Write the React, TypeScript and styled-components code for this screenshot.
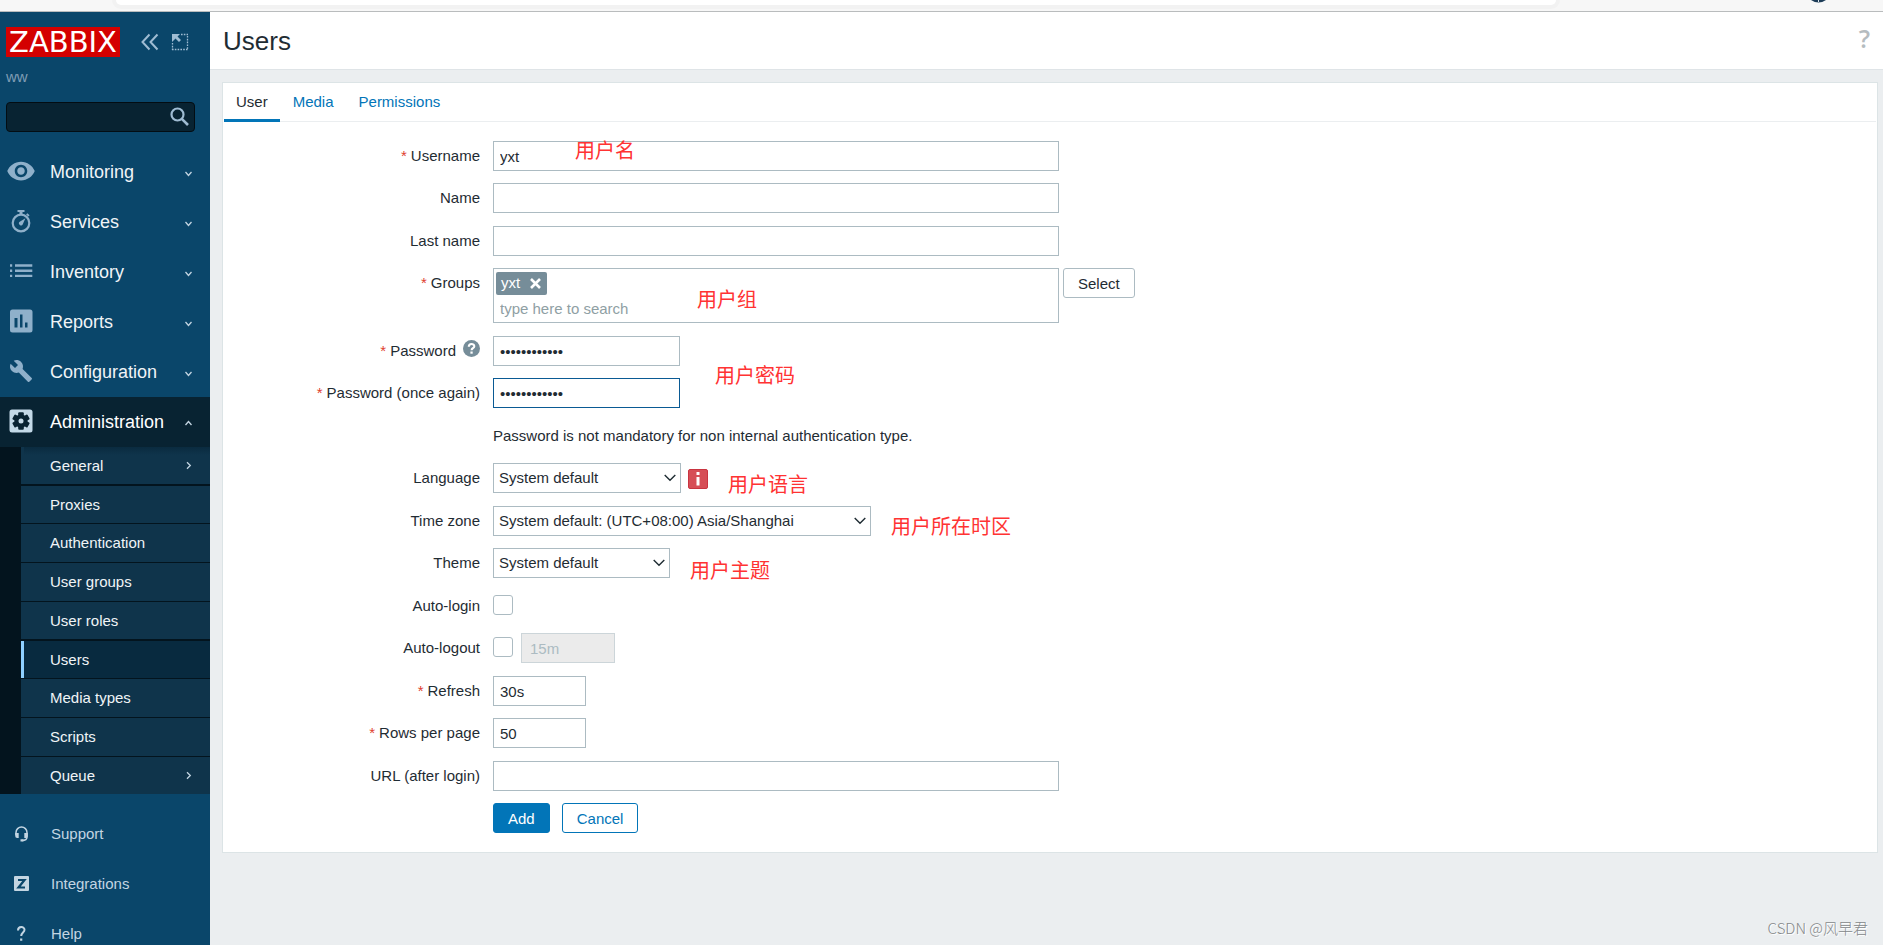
import React from "react";
import styled, { createGlobalStyle, css } from "styled-components";

const GlobalStyle = createGlobalStyle`
  *, *::before, *::after { box-sizing: border-box; }
  html, body, #root { height: 100%; }
  body {
    margin: 0;
    overflow: hidden;
    background: #ebeef0;
    color: #1f2c33;
    font: 15px/20px "Liberation Sans", Arial, "Noto Sans CJK SC", sans-serif;
  }
  button, input, select { font: inherit; color: inherit; }
`;

/* ---------- Browser edge ---------- */

const Page = styled.div`
  position: relative;
  display: flex;
  flex-direction: column;
  height: 100vh;
`;

const BrowserEdge = styled.div`
  flex: none;
  display: flex;
  justify-content: space-between;
  height: 12px;
  padding: 0 57px 0 116px;
  background: #f7f7f7;
  border-bottom: 1px solid #b9bcbd;
`;

const AddressBar = styled.div`
  flex: 1;
  height: 5px;
  margin-right: 255px;
  background: #fff;
  border-radius: 0 0 5px 5px;
  box-shadow: 0 0 0 4px #f2f2f2;
`;

const Shell = styled.div`
  flex: 1;
  display: flex;
  min-height: 0;
`;

/* ---------- Sidebar ---------- */

const Sidebar = styled.aside`
  flex: none;
  width: 210px;
  overflow: hidden;
  background: #0a466a;
`;

const SidebarHeader = styled.div`
  display: flex;
  align-items: center;
  padding: 15px 0 0 6px;
`;

const Logo = styled.a`
  width: 114px;
  height: 30px;
  margin-right: 18px;
  background: #d40000;
  color: #fff;
  font: 29px/30px "DejaVu Sans", sans-serif;
  text-align: center;
  text-decoration: none;
`;

const IconButton = styled.button`
  display: flex;
  align-items: center;
  justify-content: center;
  width: 30px;
  height: 30px;
  padding: 0;
  border: 0;
  background: none;
  color: #9fbcd3;
`;

const ServerName = styled.div`
  padding: 10px 6px 0;
  color: #7f9db5;
`;

const Search = styled.form`
  display: flex;
  align-items: center;
  height: 30px;
  margin: 15px 15px 15px 6px;
  background: #082332;
  border: 1px solid #030d13;
  border-radius: 4px;
`;

const SearchInput = styled.input`
  flex: 1;
  min-width: 0;
  padding: 0 6px;
  border: 0;
  outline: 0;
  background: none;
  color: #fff;
`;

const MenuList = styled.ul`
  margin: 0;
  padding: 0;
  list-style: none;
`;

const MenuLink = styled.a<{ $open?: boolean }>`
  display: flex;
  align-items: center;
  height: 50px;
  padding: 0 17px 0 6px;
  color: ${(p) => (p.$open ? "#fff" : "#f0f4f7")};
  background: ${(p) => (p.$open ? "#082332" : "transparent")};
  font-size: 18px;
  text-decoration: none;
  svg:first-child { color: ${(p) => (p.$open ? "#c3d9e7" : "#8fb0ca")}; }
`;

const MenuText = styled.span`
  flex: 1;
  padding-left: 14px;
`;

const SubMenu = styled.ul`
  margin: 0;
  padding: 0 0 0 21px;
  list-style: none;
  background: #03141e;
`;

const SubItem = styled.li`
  height: 39px;
  padding-bottom: 1px;
  &:nth-child(4n + 1) { padding-bottom: 2px; }
  &:nth-child(4n + 2) { height: 38px; }
  &:first-child a { background: linear-gradient(#0a2b3f, #0f344b 8px); }
  &:last-child { height: 37px; padding: 0; }
`;

const SubLink = styled.a<{ $current?: boolean }>`
  display: flex;
  align-items: center;
  justify-content: space-between;
  height: 100%;
  padding: 0 17px 0 26px;
  border-left: 3px solid #0f344b;
  background: #0f344b;
  color: #f0f4f7;
  text-decoration: none;
  ${(p) =>
    p.$current &&
    css`
      border-color: #8fd0ff;
      background: #082a3f;
    `}
`;

const SupportList = styled(MenuList)`
  margin-top: 15px;
`;

const SupportLink = styled.a`
  display: flex;
  align-items: center;
  gap: 15px;
  height: 50px;
  padding-left: 6px;
  color: #c3d5e2;
  text-decoration: none;
`;

/* ---------- Main column ---------- */

const Main = styled.main`
  flex: 1;
  min-width: 0;
`;

const PageHeader = styled.header`
  display: flex;
  align-items: center;
  justify-content: space-between;
  height: 58px;
  padding: 0 13px;
  background: #fff;
  border-bottom: 1px solid #dfe4e7;
`;

const Title = styled.h1`
  margin: 0;
  font-size: 26px;
  line-height: 30px;
  font-weight: 400;
`;

const HelpLink = styled.a`
  padding-bottom: 5px;
  color: #b5bcc0;
  font: 600 25px/30px "Open Sans", sans-serif;
  text-decoration: none;
`;

const Card = styled.section`
  margin: 12px 5px 0 12px;
  padding-bottom: 19px;
  background: #fff;
  border: 1px solid #dce4e6;
`;

const Tabs = styled.nav`
  display: flex;
  gap: 1px;
  height: 39px;
  margin: 0 1px;
  border-bottom: 1px solid #ebeef0;
`;

const Tab = styled.a<{ $active?: boolean }>`
  height: 39px;
  padding: 9px 12px 7px;
  color: ${(p) => (p.$active ? "#1f2c33" : "#0275b8")};
  border-bottom: 3px solid ${(p) => (p.$active ? "#0275b8" : "transparent")};
  text-decoration: none;
`;

const Form = styled.form`
  padding-top: 19px;
`;

/* Rows alternate 12px and 13px gaps: a 42.5px rhythm on whole pixels. */
const Row = styled.div`
  display: grid;
  grid-template-columns: 257px minmax(0, 1fr);
  column-gap: 13px;
  margin-bottom: 12px;
  &:nth-child(even) { margin-bottom: 13px; }
  &:last-child { margin-bottom: 0; }
`;

const Label = styled.label<{ $required?: boolean }>`
  display: flex;
  justify-content: flex-end;
  align-items: center;
  height: 30px;
  ${(p) =>
    p.$required &&
    css`
      &::before {
        content: "*";
        margin-right: 4px;
        color: #e0402f;
      }
    `}
`;

const LabelCell = styled.div`
  display: flex;
  justify-content: flex-end;
  gap: 7px;
`;

const HelpBadge = styled.button`
  width: 17px;
  height: 17px;
  margin-top: 4px;
  padding: 0;
  border: 0;
  background: none;
  svg { display: block; }
`;

const Field = styled.div<{ $gap?: number }>`
  position: relative;
  display: flex;
  gap: ${(p) => p.$gap ?? 0}px;
  min-height: 30px;
`;

const Input = styled.input<{ $width: number; $focused?: boolean }>`
  width: ${(p) => p.$width}px;
  height: 30px;
  padding: 0 6px;
  border: 1px solid ${(p) => (p.$focused ? "#0a5a94" : "#acbbc2")};
  border-radius: 0;
  background: #fff;
  outline: 0;
  &:disabled {
    padding-left: 8px;
    background: #ebebeb;
    border-color: #ccd5d9;
    color: #acbbc2;
  }
`;

const Multiselect = styled.div`
  width: 566px;
  height: 55px;
  margin-right: 4px;
  padding: 3px 2px;
  border: 1px solid #acbbc2;
`;

const Tag = styled.span`
  display: flex;
  align-items: center;
  justify-content: space-between;
  width: 51px;
  height: 23px;
  padding: 0 6px 1px 5px;
  border-radius: 2px;
  background: #768d99;
  color: #fff;
`;

const TagRemove = styled.button`
  display: flex;
  padding: 0;
  border: 0;
  background: none;
`;

const GroupSearch = styled.input`
  display: block;
  width: 100%;
  height: 26px;
  padding: 0 4px;
  border: 0;
  outline: 0;
  background: none;
  &::placeholder { color: #8fa0a4; opacity: 1; }
`;

const SelectBox = styled.div<{ $width: number }>`
  position: relative;
  width: ${(p) => p.$width}px;
  height: 30px;
  svg {
    position: absolute;
    top: 11px;
    right: 5px;
    pointer-events: none;
  }
`;

const NativeSelect = styled.select`
  appearance: none;
  width: 100%;
  height: 30px;
  padding: 0 20px 0 5px;
  border: 1px solid #acbbc2;
  border-radius: 0;
  background: #fff;
`;

const InfoButton = styled.button`
  display: flex;
  align-items: center;
  justify-content: center;
  width: 20px;
  height: 20px;
  margin-top: 6px;
  padding: 0;
  border: 1px solid #c93440;
  border-radius: 2px;
  background: #d64e56;
`;

const Checkbox = styled.input`
  appearance: none;
  width: 20px;
  height: 20px;
  margin: 4px 0 0;
  border: 1px solid #acbbc2;
  border-radius: 3px;
  background: #fff;
`;

const Message = styled.div`
  line-height: 30px;
`;

const Button = styled.button<{ $kind?: "plain" | "primary" | "outline" }>`
  height: 30px;
  padding: 1px 14px 0;
  border-radius: 3px;
  border: 1px solid ${(p) => (p.$kind === "plain" ? "#acbbc2" : "#0275b8")};
  background: ${(p) => (p.$kind === "primary" ? "#0275b8" : "#fff")};
  color: ${(p) =>
    p.$kind === "primary" ? "#fff" : p.$kind === "outline" ? "#0275b8" : "#1f2c33"};
`;

/* Red remark laid over the form. */
const Note = styled.span<{ $left: number; $top: number }>`
  position: absolute;
  left: ${(p) => p.$left}px;
  top: ${(p) => p.$top}px;
  color: #ff3333;
  font: 400 20px/30px "Noto Sans CJK SC", sans-serif;
  white-space: nowrap;
  pointer-events: none;
`;

const Watermark = styled.div`
  position: absolute;
  right: 15px;
  bottom: 7px;
  color: #85888a;
  font: 300 15px/20px "Noto Sans CJK SC", sans-serif;
  text-shadow: 1px 1px 0 #fff;
`;

/* ---------- Icons ---------- */

const Box30 = ({ children }: { children: React.ReactNode }) => (
  <svg width="30" height="30" viewBox="0 0 30 30" fill="currentColor" aria-hidden="true">
    {children}
  </svg>
);

const EyeIcon = () => (
  <Box30>
    <path
      transform="translate(0 -1) scale(1.25)"
      fillRule="evenodd"
      d="M12 4.5C7 4.5 2.73 7.61 1 12c1.73 4.39 6 7.5 11 7.5s9.27-3.11 11-7.5c-1.73-4.39-6-7.5-11-7.5zM12 17c-2.76 0-5-2.24-5-5s2.24-5 5-5 5 2.24 5 5-2.24 5-5 5zm0-8c-1.66 0-3 1.34-3 3s1.34 3 3 3 3-1.34 3-3-1.34-3-3-3z"
    />
  </Box30>
);

const StopwatchIcon = () => (
  <Box30>
    <circle cx="15" cy="16" r="8.3" fill="none" stroke="currentColor" strokeWidth="2.2" />
    <path d="M11.500 3h7v2h-2v2h-3V5h-2zM21.300 6.200l2.300 2-1.300 1.400-2.200-2zM19.400 11.200l-2.600 6a2 2 0 1 1-3.100-2.400z" />
  </Box30>
);

const ListIcon = () => (
  <Box30>
    <path d="M4 7.300h2.200v2.400H4zM9 7.300h17.300v2.400H9zM4 12.500h2.200v2.400H4zM9 12.500h17.300v2.400H9zM4 17.700h2.200v2.400H4zM9 17.700h17.300v2.400H9z" />
  </Box30>
);

const ReportIcon = () => (
  <Box30>
    <path
      fillRule="evenodd"
      d="M6.500 2.500h17.500A2.500 2.500 0 0 1 26.500 5v18a2.500 2.500 0 0 1-2.500 2.500h-17.500A2.500 2.500 0 0 1 4 23V5a2.500 2.500 0 0 1 2.500-2.500zM8.500 11v9.500h3V11zM14 7.500v13h2.500v-13zM19 15.500v5h2.500v-5z"
    />
  </Box30>
);

const WrenchIcon = () => (
  <Box30>
    <path
      transform="translate(3 2)"
      d="M22.700 19l-9.100-9.100c.9-2.300.4-5-1.500-6.900-2-2-5-2.400-7.400-1.300L9 6 6 9 1.600 4.700C.4 7.100.9 10.100 2.900 12.100c1.900 1.900 4.600 2.400 6.900 1.500l9.100 9.100c.4.4 1 .4 1.400 0l2.300-2.300c.5-.4.5-1.100.1-1.400z"
    />
  </Box30>
);

const GearIcon = () => (
  <Box30>
    <rect x="3.500" y="2.500" width="23" height="23" rx="2.500" />
    <g fill="#082332">
      <circle cx="15" cy="14" r="6.600" />
      {[0, 60, 120].map((a) => (
        <rect key={a} x="12.200" y="5.300" width="5.600" height="17.400" rx="1" transform={`rotate(${a} 15 14)`} />
      ))}
    </g>
    <circle cx="15" cy="14" r="2.500" />
  </Box30>
);

const HeadsetIcon = () => (
  <Box30>
    <path
      d="M10 16v-2.500a5.500 5.500 0 0 1 11 0V18c0 2-1.500 3.500-5 3.500"
      fill="none"
      stroke="currentColor"
      strokeWidth="1.500"
    />
    <path d="M9.200 14h3.500v5h-1.500a2 2 0 0 1-2-2zM18.300 14h3.500v3a2 2 0 0 1-2 2h-1.500zM14.500 20.300h3v2.200h-3z" />
  </Box30>
);

const ZIcon = () => (
  <Box30>
    <rect x="8" y="7" width="15" height="15" rx="1" />
    <path d="M12 11h6.500l-6 7.500H19" fill="none" stroke="#0a466a" strokeWidth="2.200" />
  </Box30>
);

const QuestionIcon = () => (
  <Box30>
    <path
      d="M12 11.500c0-4.500 6.500-4.300 6.500-.8 0 2.800-3.300 2.800-3.300 6.300"
      fill="none"
      stroke="currentColor"
      strokeWidth="2"
    />
    <path d="M14.100 19.500h2.200v2.200h-2.200z" />
  </Box30>
);

const Chevron = ({ dir }: { dir: "up" | "down" | "right" }) => (
  <svg width="9" height="9" viewBox="0 0 9 9" fill="none" stroke="#c3d5e2" strokeWidth="1.300" aria-hidden="true">
    <path d={{ up: "M1.500 7l3-3.500L7.500 7", down: "M1.500 4l3 3.500L7.500 4", right: "M3 1.300l3.300 3.200L3 7.700" }[dir]} />
  </svg>
);

const SelectArrow = () => (
  <svg width="12" height="8" viewBox="0 0 12 8" fill="none" stroke="#1f2c33" strokeWidth="1.400" aria-hidden="true">
    <path d="M.7 1l5.300 5.300L11.300 1" />
  </svg>
);

/* ---------- Data ---------- */

const menu = [
  { text: "Monitoring", icon: <EyeIcon /> },
  { text: "Services", icon: <StopwatchIcon /> },
  { text: "Inventory", icon: <ListIcon /> },
  { text: "Reports", icon: <ReportIcon /> },
  { text: "Configuration", icon: <WrenchIcon /> },
  { text: "Administration", icon: <GearIcon />, open: true },
];

const administration = [
  { text: "General", nested: true },
  { text: "Proxies" },
  { text: "Authentication" },
  { text: "User groups" },
  { text: "User roles" },
  { text: "Users", current: true },
  { text: "Media types" },
  { text: "Scripts" },
  { text: "Queue", nested: true },
];

const support = [
  { text: "Support", icon: <HeadsetIcon /> },
  { text: "Integrations", icon: <ZIcon /> },
  { text: "Help", icon: <QuestionIcon /> },
];

interface TextRowProps {
  id: string;
  label: string;
  width: number;
  value?: string;
  type?: string;
  required?: boolean;
  focused?: boolean;
  children?: React.ReactNode;
}

const TextRow = ({ id, label, width, value = "", type = "text", required, focused, children }: TextRowProps) => (
  <Row>
    <Label htmlFor={id} $required={required}>{label}</Label>
    <Field>
      <Input id={id} type={type} $width={width} $focused={focused} defaultValue={value} />
      {children}
    </Field>
  </Row>
);

interface SelectRowProps {
  id: string;
  label: string;
  width: number;
  value: string;
  children?: React.ReactNode;
}

const SelectRow = ({ id, label, width, value, children }: SelectRowProps) => (
  <Row>
    <Label htmlFor={id}>{label}</Label>
    <Field $gap={7}>
      <SelectBox $width={width}>
        <NativeSelect id={id}>
          <option>{value}</option>
        </NativeSelect>
        <SelectArrow />
      </SelectBox>
      {children}
    </Field>
  </Row>
);

export default function App() {
  return (
    <Page>
      <GlobalStyle />
      <BrowserEdge>
        <AddressBar />
        <svg width="15" height="3" viewBox="0 0 15 3" aria-hidden="true">
          <path d="M0 0h15Q7.500 5 0 0z" fill="#1d3c57" />
          <path d="M7 0h1v2H7z" fill="#dfe8ee" />
        </svg>
      </BrowserEdge>
      <Shell>
        <Sidebar>
          <SidebarHeader>
            <Logo href="#">ZABBIX</Logo>
            <IconButton type="button" aria-label="Collapse sidebar">
              <svg width="30" height="30" viewBox="0 0 30 30" fill="none" stroke="currentColor" strokeWidth="2" aria-hidden="true">
                <path d="M11.500 7.500L4.500 15l7 7.500M19.500 7.500L12.500 15l7 7.500" />
              </svg>
            </IconButton>
            <IconButton type="button" aria-label="Hide sidebar">
              <svg width="30" height="30" viewBox="0 0 30 30" fill="none" stroke="currentColor" aria-hidden="true">
                <path d="M13 7.500h7M19.500 9v14M4.500 16v7M4 22.500h16" strokeWidth="1.300" strokeDasharray="1.600 1.200" />
                <path d="M4 7h8l-2.500 2.500 3.500 3.500-2 2-3.500-3.500L4 15z" fill="currentColor" stroke="none" />
              </svg>
            </IconButton>
          </SidebarHeader>
          <ServerName>ww</ServerName>
          <Search role="search">
            <SearchInput type="text" aria-label="Search" />
            <IconButton type="button" aria-label="Run search">
              <svg width="30" height="30" viewBox="0 0 30 30" fill="none" stroke="currentColor" aria-hidden="true">
                <circle cx="13.500" cy="12.500" r="6" strokeWidth="2.200" />
                <path d="M17.800 16.800l6.200 6.200" strokeWidth="2.600" />
              </svg>
            </IconButton>
          </Search>
          <nav>
            <MenuList>
              {menu.map((m) => (
                <li key={m.text}>
                  <MenuLink href="#" $open={m.open}>
                    {m.icon}
                    <MenuText>{m.text}</MenuText>
                    <Chevron dir={m.open ? "up" : "down"} />
                  </MenuLink>
                  {m.open && (
                    <SubMenu>
                      {administration.map((s) => (
                        <SubItem key={s.text}>
                          <SubLink href="#" $current={s.current}>
                            {s.text}
                            {s.nested && <Chevron dir="right" />}
                          </SubLink>
                        </SubItem>
                      ))}
                    </SubMenu>
                  )}
                </li>
              ))}
            </MenuList>
            <SupportList>
              {support.map((s) => (
                <li key={s.text}>
                  <SupportLink href="#">
                    {s.icon}
                    {s.text}
                  </SupportLink>
                </li>
              ))}
            </SupportList>
          </nav>
        </Sidebar>
        <Main>
          <PageHeader>
            <Title>Users</Title>
            <HelpLink href="#" aria-label="Help">?</HelpLink>
          </PageHeader>
          <Card>
            <Tabs>
              <Tab href="#" $active>User</Tab>
              <Tab href="#">Media</Tab>
              <Tab href="#">Permissions</Tab>
            </Tabs>
            <Form>
              <TextRow id="username" label="Username" width={566} value="yxt" required>
                <Note $left={82} $top={-6}>用户名</Note>
              </TextRow>
              <TextRow id="name" label="Name" width={566} />
              <TextRow id="surname" label="Last name" width={566} />
              <Row>
                <Label htmlFor="groups" $required>Groups</Label>
                <Field>
                  <Multiselect>
                    <Tag>
                      yxt
                      <TagRemove type="button" aria-label="Remove yxt">
                        <svg width="11" height="11" viewBox="0 0 11 11" stroke="#fff" strokeWidth="2.600" aria-hidden="true">
                          <path d="M1 1l9 9M10 1l-9 9" />
                        </svg>
                      </TagRemove>
                    </Tag>
                    <GroupSearch id="groups" type="text" placeholder="type here to search" />
                  </Multiselect>
                  <Button type="button" $kind="plain">Select</Button>
                  <Note $left={204} $top={16}>用户组</Note>
                </Field>
              </Row>
              <Row>
                <LabelCell>
                  <Label htmlFor="password1" $required>Password</Label>
                  <HelpBadge type="button" aria-label="Password requirements">
                    <svg width="17" height="17" viewBox="0 0 17 17" aria-hidden="true">
                      <circle cx="8.500" cy="8.500" r="8.500" fill="#768d99" />
                      <path d="M5.800 6.700c0-3.600 5.500-3.400 5.500-.5 0 2-2.700 2-2.700 4" fill="none" stroke="#fff" strokeWidth="2.100" />
                      <path d="M7.400 11.500h2.300v2.200H7.400z" fill="#fff" />
                    </svg>
                  </HelpBadge>
                </LabelCell>
                <Field>
                  <Input id="password1" type="password" $width={187} defaultValue="zabbixzabbix" />
                  <Note $left={222} $top={24}>用户密码</Note>
                </Field>
              </Row>
              <TextRow id="password2" label="Password (once again)" width={187} type="password" value="zabbixzabbix" required focused />
              <Row>
                <span />
                <Message>Password is not mandatory for non internal authentication type.</Message>
              </Row>
              <SelectRow id="lang" label="Language" width={188} value="System default">
                <InfoButton type="button" aria-label="Language information">
                  <svg width="6" height="14" viewBox="0 0 6 14" fill="#fff" aria-hidden="true">
                    <path d="M1.500 0h3v3h-3zM1.500 5h3v8.500h-3z" />
                  </svg>
                </InfoButton>
                <Note $left={235} $top={6}>用户语言</Note>
              </SelectRow>
              <SelectRow id="timezone" label="Time zone" width={378} value="System default: (UTC+08:00) Asia/Shanghai">
                <Note $left={398} $top={5}>用户所在时区</Note>
              </SelectRow>
              <SelectRow id="theme" label="Theme" width={177} value="System default">
                <Note $left={197} $top={7}>用户主题</Note>
              </SelectRow>
              <Row>
                <Label htmlFor="autologin">Auto-login</Label>
                <Field>
                  <Checkbox id="autologin" type="checkbox" />
                </Field>
              </Row>
              <Row>
                <Label htmlFor="autologout">Auto-logout</Label>
                <Field $gap={8}>
                  <Checkbox id="autologout" type="checkbox" />
                  <Input type="text" aria-label="Auto-logout period" $width={94} defaultValue="15m" disabled />
                </Field>
              </Row>
              <TextRow id="refresh" label="Refresh" width={93} value="30s" required />
              <TextRow id="rows" label="Rows per page" width={93} value="50" required />
              <TextRow id="url" label="URL (after login)" width={566} />
              <Row>
                <span />
                <Field $gap={12}>
                  <Button type="submit" $kind="primary">Add</Button>
                  <Button type="button" $kind="outline">Cancel</Button>
                </Field>
              </Row>
            </Form>
          </Card>
        </Main>
      </Shell>
      <Watermark>CSDN @风早君</Watermark>
    </Page>
  );
}
